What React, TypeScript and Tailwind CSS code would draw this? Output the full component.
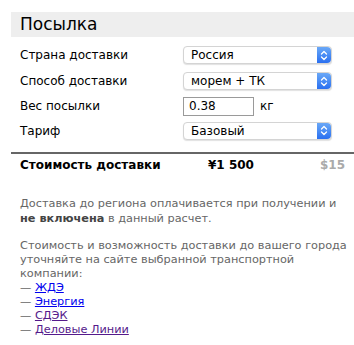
import React from "react";

function Stepper() {
  return (
    <div className="w-[14px] self-stretch rounded-r-[4px] bg-gradient-to-b from-[#6aa8f7] to-[#2a6ff0] flex items-center justify-center">
      <svg width="8" height="11" viewBox="0 0 8 11" fill="none">
        <path d="M1.5 4 L4 1.5 L6.5 4" stroke="white" strokeWidth="1.3" strokeLinecap="round" strokeLinejoin="round" />
        <path d="M1.5 7 L4 9.5 L6.5 7" stroke="white" strokeWidth="1.3" strokeLinecap="round" strokeLinejoin="round" />
      </svg>
    </div>
  );
}

function FakeSelect({ value }: { value: string }) {
  return (
    <div className="w-[149px] h-[18px] flex items-stretch rounded-[4px] border border-[#d4d4d4] bg-white shadow-[0_1px_1px_rgba(0,0,0,0.12)]">
      <div className="flex-1 pl-[7px] text-[12px] leading-[16px] text-black">{value}</div>
      <Stepper />
    </div>
  );
}

export default function App() {
  return (
    <div className="w-[354px] h-[345px] bg-white pl-[11px] pt-[12px] text-black" style={{ fontFamily: '"DejaVu Sans", Verdana, sans-serif' }}>
      <div className="h-[25px] bg-[#eeeeee] pl-[9px] text-[17px] leading-[25px]">Посылка</div>
      <div className="pl-[9px] text-[12px] pt-[5px]">
        <div className="flex items-center h-[26px]">
          <div className="w-[163px]">Страна доставки</div>
          <FakeSelect value="Россия" />
        </div>
        <div className="flex items-center h-[26px]">
          <div className="w-[163px]">Способ доставки</div>
          <FakeSelect value="морем + ТК" />
        </div>
        <div className="flex items-center h-[24px]">
          <div className="w-[163px]">Вес посылки</div>
          <div className="w-[71px] h-[19px] border border-[#9a9a9a] bg-white pl-[5px] text-[12px] leading-[17px]">0.38</div>
          <div className="ml-[6px] text-[12px]">кг</div>
        </div>
        <div className="flex items-center h-[25px]">
          <div className="w-[163px]">Тариф</div>
          <FakeSelect value="Базовый" />
        </div>
      </div>
      <div className="mt-[9px] border-t-2 border-[#666666]"></div>
      <div className="flex items-center h-[22px] pl-[9px] text-[12px] font-bold">
        <div className="w-[188px]">Стоимость доставки</div>
        <div className="w-[112px]">¥1 500</div>
        <div className="text-[#aaaaaa]">$15</div>
      </div>
      <div className="pl-[9px] pr-[4px] pt-[20px] text-[11.3px] leading-[15px] text-[#666666]">
        <p>Доставка до региона оплачивается при получении и <b className="text-[#444444]">не включена</b> в данный расчет.</p>
        <p className="mt-[13px] leading-[14px]">Стоимость и возможность доставки до вашего города уточняйте на сайте выбранной транспортной компании:</p>
        <div className="leading-[14px]">
          <div>— <a href="#" className="text-[#0000ee] underline">ЖДЭ</a></div>
          <div>— <a href="#" className="text-[#0000ee] underline">Энергия</a></div>
          <div>— <a href="#" className="text-[#551a8b] underline">СДЭК</a></div>
          <div>— <a href="#" className="text-[#551a8b] underline">Деловые Линии</a></div>
        </div>
      </div>
    </div>
  );
}
